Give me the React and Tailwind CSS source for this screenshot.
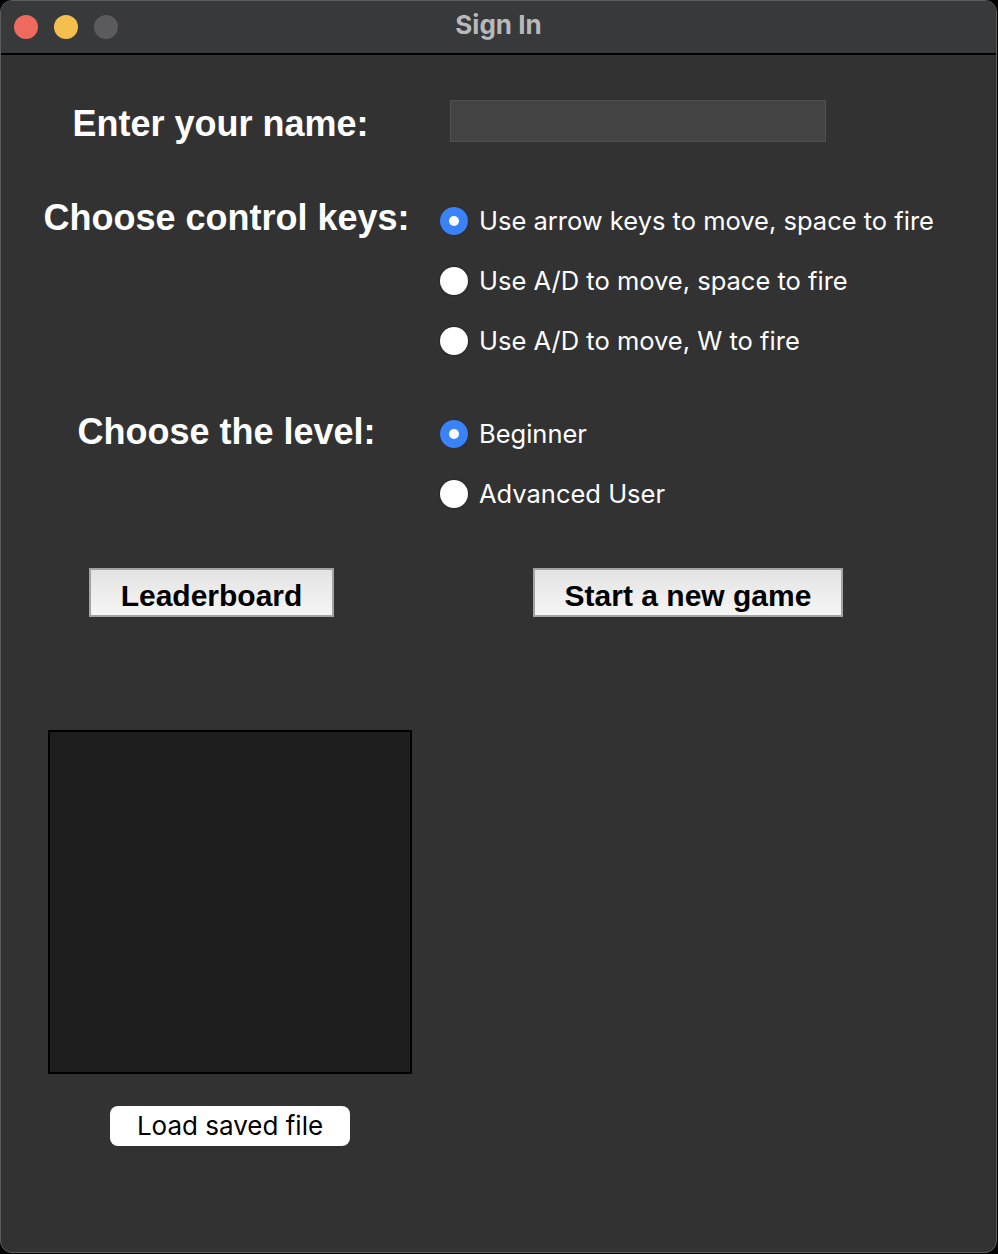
const controlOptions = [
  "Use arrow keys to move, space to fire",
  "Use A/D to move, space to fire",
  "Use A/D to move, W to fire",
];

const levelOptions = ["Beginner", "Advanced User"];

function Radio({ checked, label }) {
  return (
    <div className="flex items-center gap-[11px] h-[60px]">
      {checked ? (
        <span className="w-[28px] h-[28px] rounded-full bg-[#3a82f7] flex items-center justify-center shadow-[0_0_1px_rgba(0,0,0,0.6)]">
          <span className="w-[10px] h-[10px] rounded-full bg-white" />
        </span>
      ) : (
        <span className="w-[28px] h-[28px] rounded-full bg-white shadow-[0_0_2px_rgba(0,0,0,0.7)]" />
      )}
      <span className="text-[25.5px] text-white">{label}</span>
    </div>
  );
}

function GreyButton({ children, className }) {
  return (
    <button
      className={
        "h-[49px] border-2 border-[#a3a3a3] bg-gradient-to-b from-[#e3e3e3] to-[#f6f6f6] text-black font-bold text-[30px] pt-[3px] font-['Liberation_Sans',Arial,sans-serif] " +
        className
      }
    >
      {children}
    </button>
  );
}

export default function App() {
  return (
    <div className="w-[998px] h-[1254px] bg-black font-['Inter',sans-serif]">
      <div className="w-[997px] h-[1253px] rounded-[12px] border border-[#5c5c5c] bg-[#323232] overflow-hidden flex flex-col">
        {/* title bar */}
        <div className="h-[54px] bg-[#38393b] border-b-2 border-black flex items-center relative shrink-0">
          <div className="flex items-center gap-[16px] pl-[13px]">
            <span className="w-[24px] h-[24px] rounded-full bg-[#ee6a5f]" />
            <span className="w-[24px] h-[24px] rounded-full bg-[#f5bf4f]" />
            <span className="w-[24px] h-[24px] rounded-full bg-[#5b5b5d]" />
          </div>
          <div className="absolute inset-0 flex items-center justify-center pb-[5px] text-[26px] font-bold text-[#b9b9ba] pointer-events-none">
            Sign In
          </div>
        </div>

        <div className="flex flex-col text-white">
          {/* name */}
          <div className="flex items-center mt-[45px] h-[42px]">
            <div className="w-[439px] pt-[6px] text-center font-bold text-[36px] font-['Liberation_Sans',Arial,sans-serif]">
              Enter your name:
            </div>
            <input
              className="ml-[10px] w-[376px] h-[42px] bg-[#434343] border border-[#505050] outline-none"
              type="text"
            />
          </div>

          {/* control keys */}
          <div className="flex mt-[49px]">
            <div className="w-[439px] pl-[12px] text-center font-bold text-[36px] leading-[54px] font-['Liberation_Sans',Arial,sans-serif]">
              Choose control keys:
            </div>
            <div className="flex flex-col">
              {controlOptions.map((o, i) => (
                <Radio key={o} label={o} checked={i === 0} />
              ))}
            </div>
          </div>

          {/* level */}
          <div className="flex mt-[33px]">
            <div className="w-[439px] pl-[12px] text-center font-bold text-[36px] leading-[56px] font-['Liberation_Sans',Arial,sans-serif]">
              Choose the level:
            </div>
            <div className="flex flex-col">
              {levelOptions.map((o, i) => (
                <Radio key={o} label={o} checked={i === 0} />
              ))}
            </div>
          </div>

          {/* buttons */}
          <div className="flex mt-[44px]">
            <GreyButton className="ml-[88px] w-[245px]">Leaderboard</GreyButton>
            <GreyButton className="ml-[199px] w-[310px]">Start a new game</GreyButton>
          </div>

          {/* saved file */}
          <div className="flex flex-col items-center w-[364px] ml-[47px] mt-[113px]">
            <div className="w-[364px] h-[344px] bg-[#1e1e1e] border-2 border-black" />
            <button className="mt-[32px] w-[240px] h-[40px] bg-white rounded-[8px] text-black text-[26px] leading-none">
              Load saved file
            </button>
          </div>
        </div>
      </div>
    </div>
  );
}
